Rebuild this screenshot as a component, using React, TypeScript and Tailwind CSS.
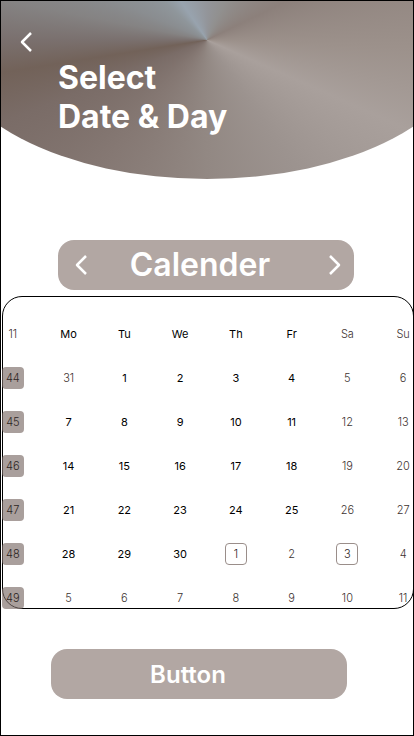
import React from "react";

type Tone = "strong" | "soft" | "outlined";

const weekdays: { label: string; weekend?: boolean }[] = [
  { label: "Mo" },
  { label: "Tu" },
  { label: "We" },
  { label: "Th" },
  { label: "Fr" },
  { label: "Sa", weekend: true },
  { label: "Su", weekend: true },
];

const weeks: { number: number; days: number[] }[] = [
  { number: 44, days: [31, 1, 2, 3, 4, 5, 6] },
  { number: 45, days: [7, 8, 9, 10, 11, 12, 13] },
  { number: 46, days: [14, 15, 16, 17, 18, 19, 20] },
  { number: 47, days: [21, 22, 23, 24, 25, 26, 27] },
  { number: 48, days: [28, 29, 30, 1, 2, 3, 4] },
  { number: 49, days: [5, 6, 7, 8, 9, 10, 11] },
];

function toneOf(week: number, day: number, column: number): Tone {
  if (week === 48 && (day === 1 || day === 3)) return "outlined";
  const otherMonth =
    (week === 44 && day === 31) || (week === 48 && day < 10) || week === 49;
  return otherMonth || column > 4 ? "soft" : "strong";
}

const toneClass: Record<Tone, string> = {
  strong: "text-black",
  soft: "font-light text-[#3d3330]",
  outlined: "rounded-[4px] border border-[#9a8e8a] font-light text-[#2d2523]",
};

function Chevron({ direction }: { direction: "left" | "right" }) {
  return (
    <svg width="14" height="22" viewBox="0 0 14 22" fill="none" aria-hidden="true">
      <path
        d={direction === "left" ? "M12 2 L3 11 L12 20" : "M2 2 L11 11 L2 20"}
        stroke="white"
        strokeWidth="2.5"
        strokeLinejoin="round"
      />
    </svg>
  );
}

export default function App() {
  return (
    <main className="flex min-h-screen flex-col overflow-hidden border border-black bg-white font-['Inter',sans-serif]">
      <header className="flex h-[178px] items-start bg-[conic-gradient(from_0deg_at_50%_39px,#93959a_0deg,#91908f_25deg,#8c807b_64deg,#9c918b_92deg,#a9a09c_114deg,#9c938f_145deg,#928883_180deg,#857873_220deg,#7a6c67_248deg,#726259_261deg,#7a706e_270deg,#858383_281deg,#8a8d90_293deg,#8f969b_312deg,#98a3ae_326deg,#93959a_360deg)] [clip-path:ellipse(64%_139px_at_50%_39px)]">
        <button type="button" aria-label="Back" className="mt-[30px] ml-[18px] mr-[25px]">
          <Chevron direction="left" />
        </button>
        <h1 className="pt-[57px] text-[32px] leading-[39px] font-bold text-white">
          Select
          <br />
          Date &amp; Day
        </h1>
      </header>

      <div className="mt-[61px] mr-[59px] ml-[57px] flex h-[50px] items-center justify-between rounded-2xl bg-[#b2a7a3] pr-3 pl-4">
        <button type="button" aria-label="Previous month">
          <Chevron direction="left" />
        </button>
        <h2 className="pr-4 text-[32px] leading-[38px] font-semibold text-white">Calender</h2>
        <button type="button" aria-label="Next month">
          <Chevron direction="right" />
        </button>
      </div>

      <section className="mt-[6px] -mr-px ml-px rounded-[20px] border border-black pt-1">
        <table className="-mb-px -ml-[18px] w-[calc(100%+36px)] table-fixed border-collapse text-center text-[11px] leading-[22px]">
          <thead>
            <tr>
              <th scope="col" className="px-0 pt-[22px] pb-0 font-light text-[#3d3330]">
                11
              </th>
              {weekdays.map(({ label, weekend }) => (
                <th
                  key={label}
                  scope="col"
                  className={`px-0 pt-[22px] pb-0 ${weekend ? "font-light text-[#3d3330]" : "font-normal text-black"}`}
                >
                  {label}
                </th>
              ))}
            </tr>
          </thead>
          <tbody>
            {weeks.map((week) => (
              <tr key={week.number}>
                <th scope="row" className="px-0 pt-[22px] pb-0 font-light text-[#2d2523]">
                  <span className="mx-auto block size-[22px] rounded-[4px] bg-[#7b6b67]/65">
                    {week.number}
                  </span>
                </th>
                {week.days.map((day, column) => {
                  const tone = toneOf(week.number, day, column);
                  return (
                    <td key={day} className="px-0 pt-[22px] pb-0">
                      <button
                        type="button"
                        className={`mx-auto flex size-[22px] items-center justify-center ${toneClass[tone]}`}
                      >
                        {day}
                      </button>
                    </td>
                  );
                })}
              </tr>
            ))}
          </tbody>
        </table>
      </section>

      <button
        type="button"
        className="mt-10 mr-[66px] ml-[50px] h-[50px] rounded-2xl bg-[#b2a7a3] pt-px pr-[22px] text-2xl font-semibold text-white"
      >
        Button
      </button>
    </main>
  );
}
